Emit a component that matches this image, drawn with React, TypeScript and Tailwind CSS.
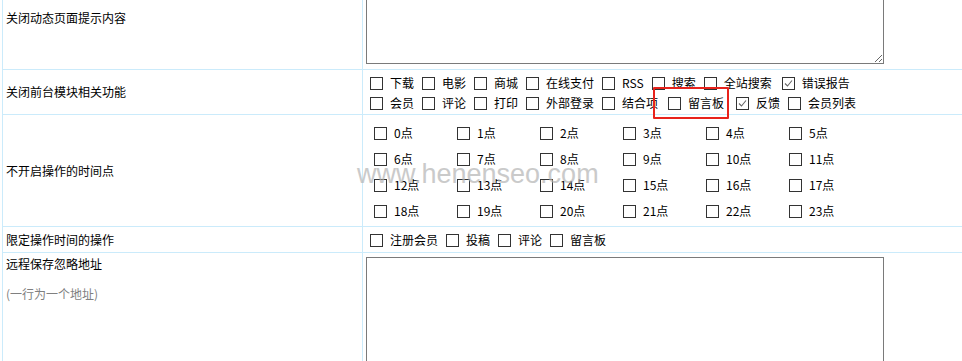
import React from "react";

const font = {
  fontFamily: '"Noto Sans CJK SC", "Microsoft YaHei", sans-serif',
};

function Box({ checked = false }: { checked?: boolean }) {
  return (
    <span className="relative inline-block w-[13px] h-[13px] shrink-0 border border-[#333] bg-white">
      {checked && (
        <svg
          className="absolute left-0 top-0"
          width="11"
          height="11"
          viewBox="0 0 11 11"
        >
          <path
            d="M2 5.5 L4.5 8 L9 2.5"
            fill="none"
            stroke="#666"
            strokeWidth="1.1"
          />
        </svg>
      )}
    </span>
  );
}

function Item({
  label,
  checked = false,
  extra = "",
}: {
  label: string;
  checked?: boolean;
  extra?: string;
}) {
  return (
    <span className={"flex items-center mr-[8px] " + extra}>
      <Box checked={checked} />
      <span className="ml-[7px] whitespace-nowrap">{label}</span>
    </span>
  );
}

function Label({ children }: { children: React.ReactNode }) {
  return (
    <div className="w-[360px] shrink-0 border-r border-[#cbebfb] pl-[3px] flex items-center">
      {children}
    </div>
  );
}

export default function App() {
  const hours = Array.from({ length: 24 }, (_, i) => i);
  return (
    <div
      className="relative w-[962px] h-[361px] overflow-hidden bg-white text-[12px] text-black"
      style={font}
    >
      <div className="-mt-[33px] ml-[2px] w-[1100px] border-l border-[#cbebfb] leading-[18px]">
        {/* Row 1 */}
        <div className="flex h-[103px] border-b border-[#cbebfb]">
          <Label>关闭动态页面提示内容</Label>
          <div className="flex-1 pt-[4px] pl-[3px]">
            <textarea className="block w-[518px] h-[93px] border border-[#7a7a7a] bg-white outline-none" />
          </div>
        </div>

        {/* Row 2 */}
        <div className="flex h-[45px] border-b border-[#cbebfb]">
          <Label>关闭前台模块相关功能</Label>
          <div className="flex-1 pt-[3px] pl-[7px]">
            <div className="flex items-center h-[20px]">
              <Item label="下载" />
              <Item label="电影" />
              <Item label="商城" />
              <Item label="在线支付" />
              <Item label="RSS" />
              <Item label="搜索" />
              <Item label="全站搜索" extra="mr-[10px]" />
              <Item label="错误报告" checked />
            </div>
            <div className="flex items-center h-[20px]">
              <Item label="会员" />
              <Item label="评论" />
              <Item label="打印" />
              <Item label="外部登录" />
              <Item label="结合项" extra="mr-[10px]" />
              <Item label="留言板" extra="mr-[12px]" />
              <Item label="反馈" checked />
              <Item label="会员列表" />
            </div>
          </div>
        </div>

        {/* Row 3 */}
        <div className="flex h-[112px] border-b border-[#cbebfb]">
          <Label>不开启操作的时间点</Label>
          <div className="flex-1 pt-[5px] pl-[11px]">
            <div className="grid grid-cols-[repeat(6,83px)]">
              {hours.map((h) => (
                <div key={h} className="flex items-center h-[26px]">
                  <Box />
                  <span className="ml-[7px]">{h}点</span>
                </div>
              ))}
            </div>
          </div>
        </div>

        {/* Row 4 */}
        <div className="flex h-[26px] border-b border-[#cbebfb]">
          <Label>限定操作时间的操作</Label>
          <div className="flex-1 pl-[7px] flex items-center pt-[1px]">
            <Item label="注册会员" />
            <Item label="投稿" />
            <Item label="评论" />
            <Item label="留言板" />
          </div>
        </div>

        {/* Row 5 */}
        <div className="flex h-[160px]">
          <div className="w-[360px] shrink-0 border-r border-[#cbebfb] pl-[3px] pt-[2px]">
            <div>远程保存忽略地址</div>
            <div className="mt-[12px] text-[#808080]">(一行为一个地址)</div>
          </div>
          <div className="flex-1 pt-[4px] pl-[3px]">
            <textarea className="block w-[518px] h-[150px] border border-[#7a7a7a] bg-white outline-none" />
          </div>
        </div>
      </div>

      {/* watermark */}
      <div
        className="pointer-events-none absolute left-[357px] top-[156px] text-[27px] leading-[36px] text-[#b4b4b4] opacity-70 whitespace-nowrap"
        style={{ fontFamily: '"Liberation Sans", Arial, sans-serif' }}
      >
        www.henenseo.com
      </div>

      {/* red highlight */}
      <div className="pointer-events-none absolute left-[653px] top-[87px] w-[76px] h-[32px] border-2 border-[#e8231c] rounded-[1px]" />
    </div>
  );
}
